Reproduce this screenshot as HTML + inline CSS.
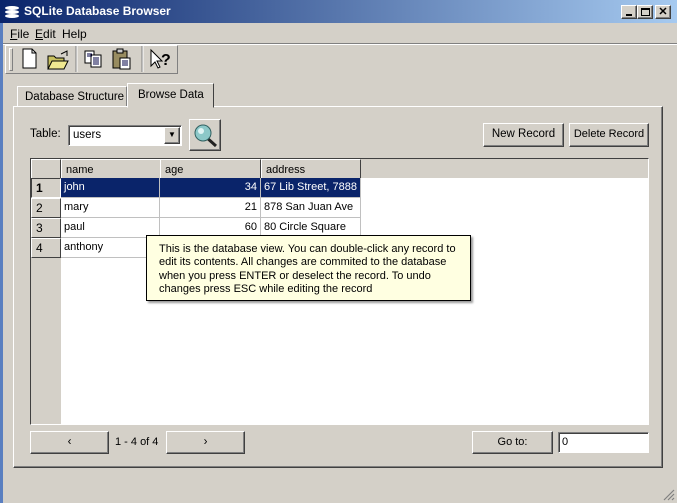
<!DOCTYPE html>
<html><head><style>
*{box-sizing:border-box;margin:0;padding:0}
body{width:677px;height:503px;overflow:hidden;background:#d4d0c8;font-family:"Liberation Sans",sans-serif;font-size:11px;color:#000;position:relative}
.a{position:absolute;white-space:nowrap}
.btn{position:absolute;background:#d4d0c8;border:1px solid;border-color:#fff #404040 #404040 #fff;box-shadow:inset -1px -1px #808080;text-align:center;font-size:11.5px;white-space:nowrap}
.sunk{position:absolute;border:1px solid;border-color:#808080 #fff #fff #808080;box-shadow:inset 1px 1px #404040;background:#fff}
.cell{position:absolute;height:20px;line-height:19px;font-size:11px;padding:0 3px;border-right:1px solid #c0c0c0;border-bottom:1px solid #c0c0c0;white-space:nowrap}
.hd{position:absolute;background:#d4d0c8;border:1px solid;border-color:#fff #404040 #404040 #fff;height:20px;line-height:18px;padding-left:4px;font-size:11px}
</style></head><body>
<div class="a" style="left:0;top:0;width:3px;height:503px;background:#5a7fc0"></div>
<div class="a" style="left:0;top:0;width:677px;height:23px;background:linear-gradient(90deg,#0a246a,#a6caf0)"></div>
<svg class="a" style="left:4px;top:5px" width="16" height="13"><ellipse cx="8" cy="3" rx="7" ry="2" fill="#fff"/><ellipse cx="8" cy="7" rx="7" ry="2" fill="#fff"/><ellipse cx="8" cy="11" rx="7" ry="2" fill="#fff"/></svg>
<div class="a" style="left:24px;top:4px;color:#fff;font-weight:bold;font-size:12px">SQLite Database Browser</div>
<div class="btn" style="left:621px;top:5px;width:16px;height:14px"><div class="a" style="left:4px;top:8px;width:6px;height:2px;background:#000"></div></div>
<div class="btn" style="left:637px;top:5px;width:16px;height:14px"><div class="a" style="left:3px;top:2px;width:9px;height:8px;border:1px solid #000;border-top-width:2px"></div></div>
<div class="btn" style="left:655px;top:5px;width:16px;height:14px;font-size:11px;line-height:12px;font-weight:bold">✕</div>
<div class="a" style="left:10px;top:27px;font-size:12px"><u>F</u>ile</div>
<div class="a" style="left:35px;top:27px;font-size:12px"><u>E</u>dit</div>
<div class="a" style="left:62px;top:27px;font-size:12px">Help</div>
<div class="a" style="left:3px;top:43px;width:674px;height:2px;border-top:1px solid #808080;border-bottom:1px solid #fff"></div>
<div class="a" style="left:5px;top:45px;width:173px;height:29px;border:1px solid;border-color:#fff #808080 #808080 #fff"></div>
<div class="a" style="left:9px;top:48px;width:4px;height:23px;border:1px solid;border-color:#fff #808080 #808080 #fff"></div>
<svg class="a" style="left:18px;top:46px" width="160" height="26">
<path d="M5 3h9l4 4v15H5z" fill="#fff" stroke="#000"/><path d="M14 3v4h4" fill="none" stroke="#000"/>
<path d="M30 10h6l2 2h8v11H30z" fill="#c8c060" stroke="#000"/><path d="M30 23l4-8h16l-4 8z" fill="#f0e890" stroke="#000"/><path d="M43 8l6-3v5" fill="none" stroke="#000"/>
<line x1="58" y1="0" x2="58" y2="26" stroke="#808080"/><line x1="59" y1="0" x2="59" y2="26" stroke="#fff"/>
<rect x="67" y="5" width="9" height="12" fill="#fff" stroke="#000"/><rect x="73" y="9" width="10" height="12" fill="#fff" stroke="#000"/><path d="M75 12h6M75 14h6M75 16h6M75 18h6M69 8h5M69 10h5" stroke="#004"/>
<rect x="95" y="5" width="14" height="17" fill="#988c60" stroke="#000"/><rect x="99" y="3" width="6" height="4" fill="#ccc" stroke="#000"/><rect x="102" y="12" width="10" height="11" fill="#fff" stroke="#000"/><path d="M104 15h6M104 17h6M104 19h6" stroke="#004"/>
<line x1="124" y1="0" x2="124" y2="26" stroke="#808080"/><line x1="125" y1="0" x2="125" y2="26" stroke="#fff"/>
<path d="M133 4v16l4-4 3 6 2-1-3-6h5z" fill="#fff" stroke="#000"/>
<text x="143" y="19" font-family="Liberation Sans" font-weight="bold" font-size="16">?</text>
</svg>
<div class="a" style="left:17px;top:86px;width:110px;height:21px;border:1px solid;border-color:#fff #808080 transparent #fff;padding:4px 0 0 7px;font-size:11.5px">Database Structure</div>
<div class="a" style="left:127px;top:83px;width:87px;height:25px;border:1px solid;border-color:#fff #404040 transparent #fff;background:#d4d0c8;padding:5px 0 0 10px;font-size:11.5px;z-index:2">Browse Data</div>
<div class="a" style="left:13px;top:106px;width:650px;height:362px;border:1px solid;border-color:#fff #404040 #404040 #fff;box-shadow:inset -1px -1px #808080"></div>
<div class="a" style="left:30px;top:128px;font-size:11.5px">Table:</div>
<div class="sunk" style="left:68px;top:125px;width:114px;height:21px;padding:3px 0 0 4px;font-size:11.5px">users</div>
<div class="btn" style="left:164px;top:127px;width:16px;height:17px;font-size:8px;line-height:14px">▼</div>
<div class="btn" style="left:189px;top:119px;width:32px;height:32px"></div>
<svg class="a" style="left:193px;top:123px" width="26" height="26"><line x1="13" y1="14" x2="23" y2="23" stroke="#222" stroke-width="3"/><circle cx="10" cy="10" r="8" fill="#8cc8c8" stroke="#306060"/><circle cx="8" cy="8" r="3" fill="#e0f4f4"/></svg>
<div class="btn" style="left:483px;top:123px;width:81px;height:24px;line-height:21px">New Record</div>
<div class="btn" style="left:569px;top:123px;width:80px;height:24px;line-height:21px;font-size:11px">Delete Record</div>
<div class="a" style="left:30px;top:158px;width:619px;height:267px;border:1px solid;border-color:#404040 #fff #fff #404040;background:#fff"></div>
<div class="a" style="left:31px;top:159px;width:30px;height:265px;background:#d4d0c8"></div>
<div class="a" style="left:31px;top:159px;width:617px;height:19px;background:#d4d0c8"></div>
<div class="hd" style="left:31px;top:159px;width:30px"></div>
<div class="hd" style="left:61px;top:159px;width:100px;line-height:20px">name</div>
<div class="hd" style="left:160px;top:159px;width:101px;line-height:20px">age</div>
<div class="hd" style="left:261px;top:159px;width:100px;line-height:20px">address</div>
<div class="hd" style="left:31px;top:178px;width:30px;font-weight:bold;border-color:#404040 #fff #fff #404040;font-size:12px">1</div>
<div class="hd" style="left:31px;top:198px;width:30px;font-size:12px">2</div>
<div class="hd" style="left:31px;top:218px;width:30px;font-size:12px">3</div>
<div class="hd" style="left:31px;top:238px;width:30px;font-size:12px">4</div>
<div class="a" style="left:61px;top:178px;width:300px;height:20px;background:#0a246a"></div>
<div class="cell" style="left:61px;top:178px;width:99px;color:#fff">john</div>
<div class="cell" style="left:160px;top:178px;width:101px;color:#fff;text-align:right">34</div>
<div class="cell" style="left:261px;top:178px;width:100px;color:#fff">67 Lib Street, 7888</div>
<div class="cell" style="left:61px;top:198px;width:99px">mary</div>
<div class="cell" style="left:160px;top:198px;width:101px;text-align:right">21</div>
<div class="cell" style="left:261px;top:198px;width:100px">878 San Juan Ave</div>
<div class="cell" style="left:61px;top:218px;width:99px">paul</div>
<div class="cell" style="left:160px;top:218px;width:101px;text-align:right">60</div>
<div class="cell" style="left:261px;top:218px;width:100px">80 Circle Square</div>
<div class="cell" style="left:61px;top:238px;width:99px">anthony</div>
<div class="cell" style="left:160px;top:238px;width:101px"></div>
<div class="a" style="left:146px;top:235px;width:325px;height:66px;background:#ffffe1;border:1px solid #000;box-shadow:2px 2px 2px rgba(0,0,0,.4);padding:7px 0 0 12px;font-size:11px;line-height:13.3px">This is the database view. You can double-click any record to<br>edit its contents. All changes are commited to the database<br>when you press ENTER or deselect the record. To undo<br>changes press ESC while editing the record</div>
<div class="btn" style="left:30px;top:431px;width:79px;height:23px;line-height:20px">‹</div>
<div class="a" style="left:115px;top:436px;font-size:11px">1 - 4 of 4</div>
<div class="btn" style="left:166px;top:431px;width:79px;height:23px;line-height:20px">›</div>
<div class="btn" style="left:472px;top:431px;width:81px;height:23px;line-height:20px;font-size:11px">Go to:</div>
<div class="sunk" style="left:558px;top:432px;width:91px;height:21px;padding:3px 0 0 3px;font-size:11px">0</div>
<svg class="a" style="left:663px;top:489px" width="12" height="12"><path d="M11 1L1 11M11 5L5 11M11 9L9 11" stroke="#808080" stroke-width="1.2"/></svg>
</body></html>
